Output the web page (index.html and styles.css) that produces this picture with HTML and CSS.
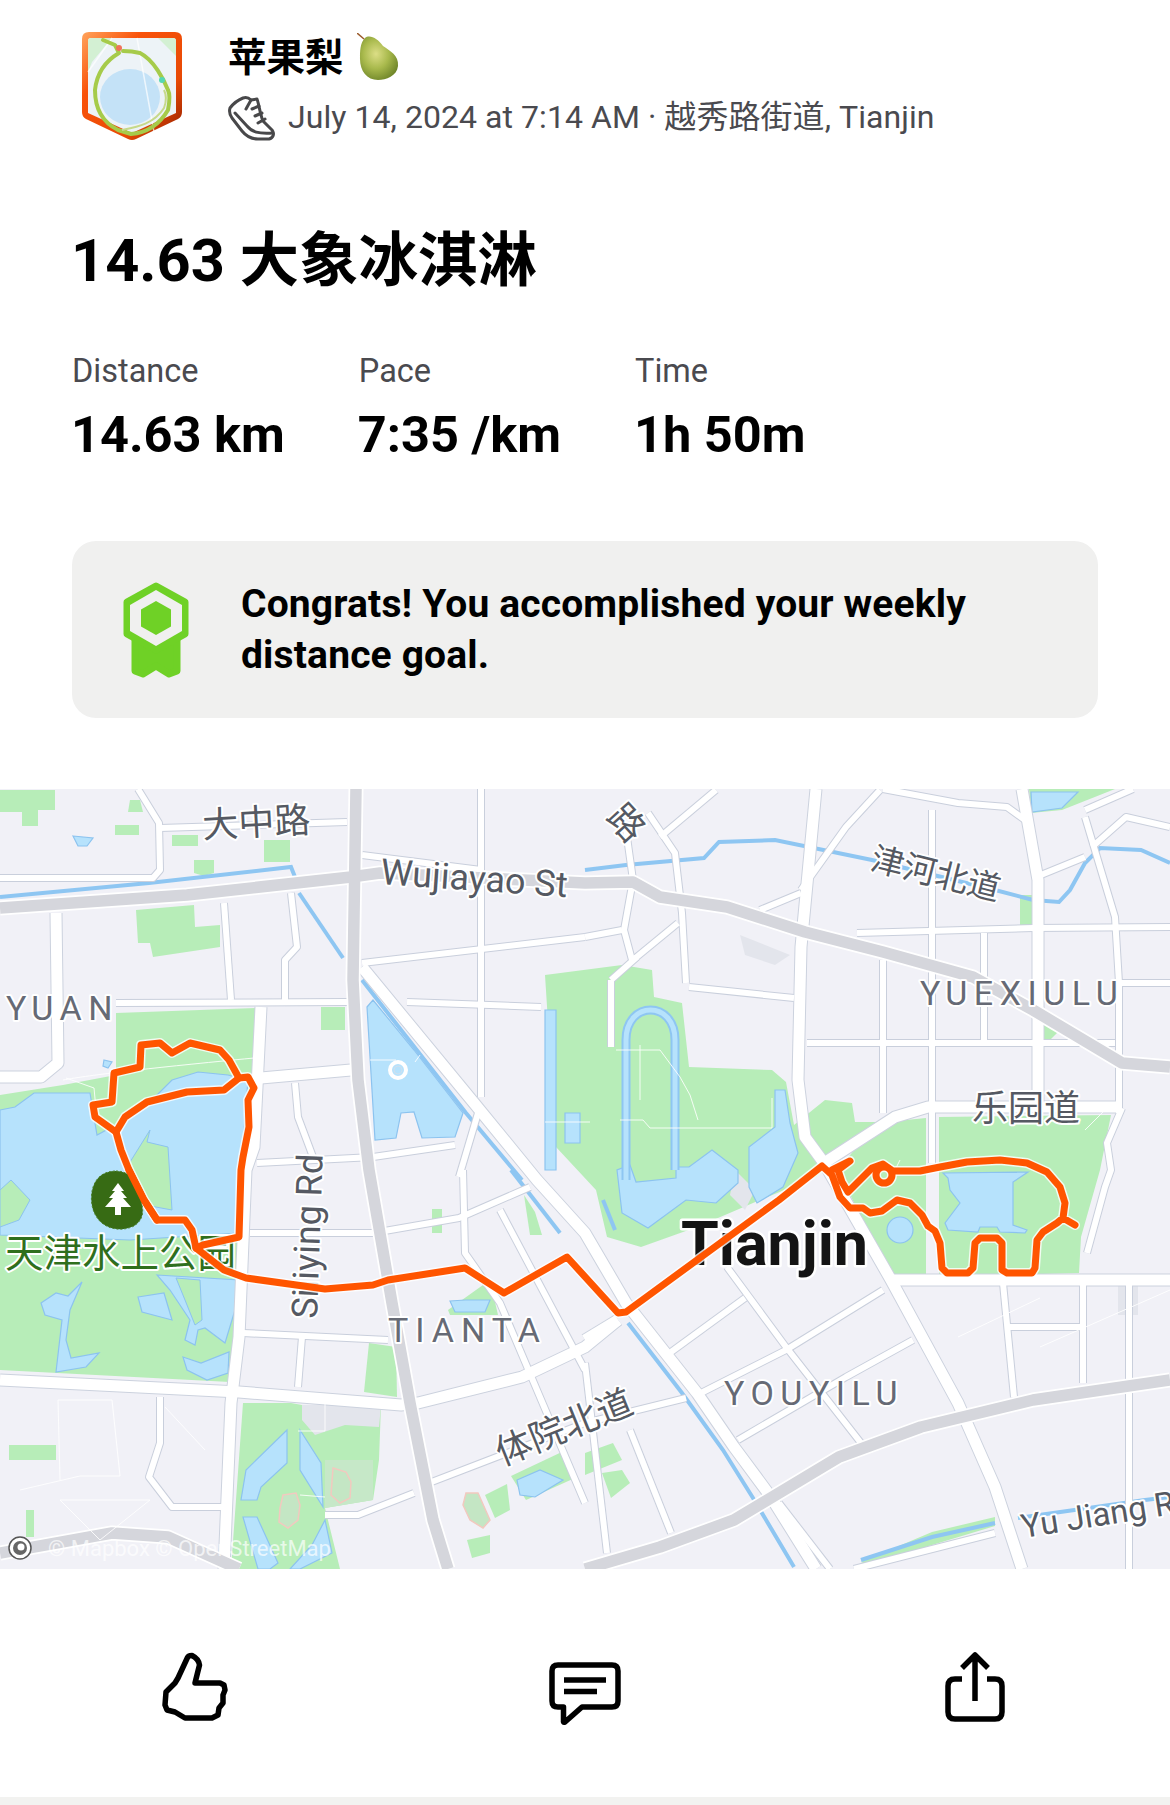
FILE: index.html
```html
<!DOCTYPE html>
<html lang="en">
<head>
<meta charset="utf-8">
<title>14.63 大象冰淇淋</title>
<link rel="stylesheet" href="styles.css">
</head>
<body>
<main class="page">
  <header class="head">
    <svg class="badge" viewBox="0 0 100 109" aria-hidden="true">
      <defs>
        <linearGradient id="shield" x1="0" y1="0" x2="1" y2="1">
          <stop offset="0" stop-color="#ffa45c"/>
          <stop offset=".3" stop-color="#f9520a"/>
          <stop offset=".7" stop-color="#e84a05"/>
          <stop offset="1" stop-color="#8f1d00"/>
        </linearGradient>
      </defs>
      <path fill="url(#shield)" d="M7 0H93Q100 0 100 7V80Q100 85 96 87L54 107Q50 109 46 107L4 87Q0 85 0 80V7Q0 0 7 0Z"/>
      <path fill="#edf3f7" d="M9 6H91Q94 6 94 9V81L50 101L6 81V9Q6 6 9 6Z"/>
      <path fill="#d3f0d3" d="M6 9Q6 6 9 6H30L10 30L6 40ZM76 6H91Q94 6 94 9V24Z"/>
      <ellipse fill="#c4e2f7" cx="48" cy="65" rx="30" ry="28"/>
      <path class="badge-line" d="M55 6L72 100M6 40L30 6"/>
      <path class="badge-route" d="M21 8L33 13L37 21C25 28 15 40 13 58C13 75 20 90 36 98L49 102C62 101 76 95 86 78C88 68 88 62 86 58C82 48 72 28 58 21C50 19 44 19 41 19"/>
      <path class="badge-route-b" d="M40 98C55 95 72 92 82 76C85 68 84 62 82 58"/>
      <circle fill="#f0735a" cx="37" cy="16" r="3"/>
      <circle fill="#55d8b4" cx="80" cy="48" r="3"/>
    </svg>
    <div class="who">
      <div class="name">苹果梨
        <svg class="pear" viewBox="0 0 42 47" aria-hidden="true">
          <defs>
            <radialGradient id="pearfill" cx=".42" cy=".4" r=".68">
              <stop offset="0" stop-color="#dcde86"/>
              <stop offset=".5" stop-color="#a8b94c"/>
              <stop offset="1" stop-color="#6a8126"/>
            </radialGradient>
          </defs>
          <path fill="url(#pearfill)" d="M8 5C13 1 21 6 26 13C33 18 42 22 41 33C40 43 29 47 21 47C10 47 3 38 3 26C3 18 3 10 8 5Z"/>
          <path class="pear-stem" d="M0 0L7 6"/>
        </svg>
      </div>
      <div class="meta">
        <svg class="shoe" viewBox="0 0 47 45" aria-hidden="true">
          <path d="M2 12C5 8 10 4 15 2C18 1 21 2 23 4L29 3C31 8 32 18 35 25L44 34C47 38 45 42 41 43H30C24 43 18 40 14 35L4 22C2 19 1 15 2 12Z"/>
          <path d="M7 17L19 30C24 36 30 38 45 37M23 4L18 13M24 13L31 10M27 20L34 17M30 27L37 23"/>
        </svg>
        <span>July 14, 2024 at 7:14 AM · 越秀路街道, Tianjin</span>
      </div>
    </div>
  </header>

  <h1 class="title">14.63 大象冰淇淋</h1>

  <section class="stats">
    <div class="stat"><div class="label">Distance</div><div class="value">14.63 km</div></div>
    <div class="stat"><div class="label">Pace</div><div class="value">7:35 /km</div></div>
    <div class="stat"><div class="label">Time</div><div class="value">1h 50m</div></div>
  </section>

  <section class="goal">
    <svg class="medal" viewBox="0 0 66 96" aria-hidden="true">
      <path class="medal-fill" d="M12 50H54V89L46 92L33 84L20 92L12 89Z"/>
      <path class="medal-fill" d="M33 4L62 20V52L33 68L4 52V20Z"/>
      <path class="medal-hole" d="M33 8L59 23V49L33 64L7 49V23Z"/>
      <path class="medal-core" d="M33 19L48 27.500V44.500L33 53L18 44.500V27.500Z"/>
    </svg>
    <p class="goal-text">Congrats! You accomplished your weekly distance goal.</p>
  </section>

  <figure class="map">
    <svg class="map-svg" viewBox="0 789 1170 780" role="img" aria-label="Route map of Tianjin">
      <defs>
        <g id="minor">
          <path d="M0 878H153L160 870L159 823L138 789"/>
          <path d="M160 828L347 822"/>
          <path d="M224 903L231 1000"/>
          <path d="M116 1003L347 1002"/>
          <path d="M291 893L297 947L285 960V1000"/>
          <path d="M362 855L481 870"/>
          <path d="M481 789V1097"/>
          <path d="M362 963L585 937"/>
          <path d="M407 1002L541 1007"/>
          <path d="M295 1083L298 1117L313 1157"/>
          <path d="M257 1163L373 1157L455 1145"/>
          <path d="M459 1177L478 1113"/>
          <path d="M250 1233H373L459 1218L530 1187"/>
          <path d="M463 1170L465 1253L500 1303L534 1383L585 1503"/>
          <path d="M243 1333L388 1340"/>
          <path d="M302 1337L298 1387"/>
          <path d="M500 1210L585 1370"/>
          <path d="M160 1397V1443L149 1477L172 1507H224"/>
          <path d="M325 1515H358L414 1493"/>
          <path d="M429 1483L585 1423L686 1398"/>
          <path d="M671 1352L745 1298"/>
          <path d="M701 1393L786 1350L883 1290"/>
          <path d="M738 1440L846 1377L913 1340"/>
          <path d="M727 1267L786 1347L861 1443"/>
          <path d="M1003 1283L1014 1397"/>
          <path d="M1007 1327H1085"/>
          <path d="M1083 1283V1383"/>
          <path d="M854 1569L995 1533"/>
          <path d="M630 1430L671 1533"/>
          <path d="M585 1363L607 1553"/>
          <path d="M779 1503L830 1569"/>
          <path d="M1087 1253L1105 1187L1111 1170L1107 1143L1122 1108"/>
          <path d="M622 930L585 937"/>
          <path d="M633 960L678 923"/>
          <path d="M626 830L633 880L624 930L632 960"/>
          <path d="M648 813L675 853L682 913L686 983"/>
          <path d="M660 837L716 790"/>
          <path d="M689 987L794 998"/>
          <path d="M801 890L846 827L880 790"/>
          <path d="M760 910L801 893"/>
          <path d="M883 789L958 803L1007 807L1025 820"/>
          <path d="M1085 810L1133 789"/>
          <path d="M1085 817L1115 917L1119 983V1113"/>
          <path d="M1092 847L1126 817L1170 827"/>
          <path d="M1036 877L1085 857"/>
          <path d="M932 810V1163"/>
          <path d="M857 933L1033 928L1170 927"/>
          <path d="M883 960V1113"/>
          <path d="M984 933V1043"/>
          <path d="M807 1043H1115"/>
          <path d="M1119 983H1170"/>
          <path d="M611 980L637 957"/>
          <path d="M611 980V1047"/>
          <path d="M1129 1283V1569"/>
        </g>
        <g id="major">
          <path d="M0 1380L239 1392L401 1405L418 1403L522 1377L585 1347L618 1320"/>
          <path d="M362 967L474 1103L537 1180L585 1233L626 1303L697 1393L734 1447L771 1497L816 1569"/>
          <path d="M261 1007L254 1147L246 1170L239 1337L231 1403L224 1569"/>
          <path d="M816 789L801 947L798 1080L805 1137L824 1163L891 1280L958 1403L995 1487L1022 1569"/>
          <path d="M891 1280H1170"/>
          <path d="M824 1163L895 1117L928 1107H1122"/>
          <path d="M1022 789L1038 880V1107"/>
          <path d="M56 913L58 1063L41 1077H0"/>
          <path d="M261 1078L351 1070"/>
          <path d="M585 1340L618 1320"/>
        </g>
        <g id="highway">
          <path d="M0 908L187 895L351 877L380 873L585 883L633 882L660 897L727 907L805 932L883 952L973 977L1033 1010L1122 1063L1170 1067"/>
          <path d="M356 789L353 980L358 1080L369 1170L392 1303L410 1403L433 1520L448 1569"/>
          <path d="M585 1569L660 1547L734 1520L839 1457L921 1427L1033 1400L1170 1380"/>
          <path d="M0 1553L112 1533L168 1537L239 1569"/>
        </g>
      </defs>

      <rect class="land" x="0" y="789" width="1170" height="780"/>

      <g class="park">
        <path d="M116 1013L257 1008L254 1073L245 1280L230 1382L0 1370V1095L63 1085L116 1075Z"/>
        <path d="M545 975L622 965L652 970L654 997L682 1003L689 1067L772 1070L786 1082L794 1125L825 1100L852 1103L855 1122L880 1122L816 1177L760 1200L697 1227L641 1247L607 1237L596 1190L556 1147Z"/>
        <path d="M939 1117L1111 1115L1100 1170L1081 1237L1079 1273L939 1277Z"/>
        <path d="M838 1170L876 1123L926 1118V1277H896L860 1215Z"/>
        <path d="M243 1403H291L302 1405H381L379 1460L373 1500L325 1508L340 1569H231Z"/>
        <path d="M1029 789H1115L1062 810L1031 813Z"/>
        <path d="M136 910L194 905L195 927L220 925V947L153 957L150 943L138 943Z"/>
        <path d="M321 1007H345V1030H321Z"/>
        <path d="M115 825H139V835H115Z"/>
        <path d="M194 860H214V873L204 876L194 873Z"/>
        <path d="M172 835H198V846H172Z"/>
        <path d="M264 840H290V862H264Z"/>
        <path d="M0 790H55V810H38V826H22V812H0Z"/>
        <path d="M130 800H140L143 812H128Z"/>
        <path d="M369 1343L396 1347L397 1397L364 1392Z"/>
        <path d="M9 1445H56V1460H9Z"/>
        <path d="M26 1510H34V1537H26Z"/>
        <path d="M585 1453L613 1443L622 1460L585 1475Z"/>
        <path d="M602 1473L622 1470L630 1483L611 1498Z"/>
        <path d="M511 1476L566 1450L575 1478L526 1500Z"/>
        <path d="M485 1495L507 1484L510 1510L495 1518Z"/>
        <path d="M467 1540L490 1535L490 1553L472 1558Z"/>
        <path d="M1020 895H1032V930H1020Z"/>
        <path d="M1040 1025H1065L1050 1040H1040Z"/>
        <path d="M432 1233H442V1209H432Z"/>
        <path d="M524 1195L535 1212L542 1235L530 1235Z"/>
        <path d="M448 1310L490 1280L498 1315L450 1315Z"/>
        <path d="M861 1562L932 1532L995 1517V1526L932 1545L870 1566Z"/>
      </g>

      <g class="park-soft">
        <path d="M325 1460L373 1460L373 1500L325 1508Z"/>
      </g>
      <path class="gray-block" d="M302 1405H381L379 1427L345 1425L315 1435L302 1420Z"/>
      <path class="gray-block" d="M1118 1285H1138V1315H1118Z"/>
      <path class="gray-block" d="M735 1170L755 1190L745 1210L730 1195Z"/>
      <path class="gray-block" d="M740 935L790 955L775 965L745 955Z"/>

      <g class="water">
        <path d="M0 1110L15 1107L34 1093L90 1093L97 1135L125 1120L149 1103L172 1080L198 1072L228 1075L248 1080L241 1170L239 1233L130 1240L0 1235Z"/>
        <path d="M41 1303L56 1293L68 1296L82 1282L70 1310L66 1340L71 1358L99 1353L86 1367L56 1372L62 1320L45 1315Z"/>
        <path d="M138 1297L164 1293L172 1320L142 1312Z"/>
        <path d="M157 1275L239 1280L235 1310L225 1343L205 1328L198 1330L195 1345L185 1340L190 1320L170 1290Z"/>
        <path d="M183 1357L201 1363L229 1352L228 1373L207 1380L187 1370Z"/>
        <path d="M367 1007L373 1000L414 1050L463 1113L455 1137L422 1138L414 1112L401 1113L396 1138L375 1140Z"/>
        <path d="M617 1170L622 1213L648 1228L686 1200L716 1203L738 1183V1170L712 1150L689 1167H676V1178L636 1182L630 1165Z"/>
        <path d="M775 1090H785L790 1123L798 1153L783 1187L757 1203L749 1187V1147L775 1127Z"/>
        <path d="M545 1010H556V1170H545Z"/>
        <path d="M565 1113H580V1143H565Z"/>
        <path d="M943 1173L1028 1172L1013 1182V1225L1027 1230L1025 1233L1000 1232L997 1227H980L978 1232L948 1230L945 1223L960 1203L950 1190L948 1178Z"/>
        <circle cx="900" cy="1230" r="13"/>
        <path d="M287 1430V1463L261 1487L257 1500H241L246 1470Z"/>
        <path d="M300 1430L321 1463L323 1507L300 1470Z"/>
        <path d="M243 1517H257L278 1563L270 1569H258Z"/>
        <path d="M325 1520L332 1553L300 1569H290L312 1545Z"/>
        <path d="M1031 792H1078L1062 808L1032 812Z"/>
        <path d="M73 836L93 838L87 846H78Z"/>
        <path d="M104 1060L112 1062L108 1068L103 1066Z"/>
        <path d="M517 1480L540 1470L563 1480L535 1497L520 1495Z"/>
        <path d="M450 1301L465 1300L490 1300L485 1312L455 1312Z"/>
      </g>
      <path class="green-isle" d="M150 1130L147 1142L168 1147L172 1210L145 1205L125 1170Z"/>
      <path class="green-isle" d="M0 1190L11 1180L30 1200L19 1220L0 1227Z"/>
      <path class="green-isle" d="M176 1278L200 1280L202 1320L195 1325L185 1300Z"/>
      <path class="track" d="M626 1180V1040C626 1000 675 1000 675 1040V1170"/>
      <path class="track-in" d="M626 1180V1040C626 1000 675 1000 675 1040V1170"/>

      <g class="canal">
        <path d="M0 897L149 883L291 867L295 877"/>
        <path d="M585 870L626 865L704 858L719 842L775 840L872 860L995 890L1033 900L1059 902L1070 890L1085 863L1100 848L1141 850L1170 863"/>
        <path d="M299 893L343 958"/>
        <path d="M362 980L466 1113L522 1180"/>
        <path d="M511 1170L560 1233"/>
        <path d="M628 1323L682 1393L723 1450L753 1498L794 1567"/>
        <path d="M861 1560L932 1537L995 1523"/>
        <path d="M1018 1518L1145 1500L1170 1497"/>
        <path d="M603 1200L615 1230"/>
      </g>

      <use href="#minor" class="case-minor"/>
      <use href="#major" class="case-major"/>
      <use href="#highway" class="case-highway"/>
      <use href="#minor" class="fill-minor"/>
      <use href="#major" class="fill-major"/>
      <use href="#highway" class="fill-highway"/>

      <g class="path-thin">
        <path d="M63 1080C90 1075 150 1068 254 1058"/>
        <path d="M66 1078L94 1088L97 1120"/>
        <path d="M616 1050H660L680 1077L690 1095L698 1120"/>
        <path d="M545 1122H590M640 1045V1100"/>
        <path d="M620 1120H643L650 1128H772"/>
        <path d="M772 1098V1128"/>
        <path d="M1085 1130L1110 1105"/>
        <path d="M396 1060H370"/>
        <path d="M415 1062L420 1055"/>
        <path d="M165 1407L205 1450"/>
        <path d="M325 1400V1431H298"/>
        <path d="M890 1180L900 1160"/>
        <path d="M1040 1347L1170 1290"/>
        <path d="M958 1337L1040 1298"/>
        <path d="M300 1495L325 1497"/>
        <path d="M20 1490L80 1476H120L112 1400H58L60 1480"/>
        <path d="M60 1500H150L100 1540L60 1500"/>
      </g>
      <circle class="ring" cx="398" cy="1070" r="8"/>
      <circle class="ring-soft" cx="398" cy="1070" r="4"/>

      <g class="pink">
        <path d="M283 1495L296 1493L300 1505L298 1520L288 1528L279 1522L280 1508Z"/>
        <path d="M333 1468L346 1472L351 1482L350 1498L340 1503L331 1495Z"/>
        <path d="M466 1493L478 1493L490 1520L483 1528L470 1520L463 1505Z"/>
      </g>

      <text class="lbl lbl-road" x="203" y="838" transform="rotate(-3 203 838)">大中路</text>
      <text class="lbl lbl-en" x="380" y="884" transform="rotate(4 380 884)">Wujiayao St</text>
      <text class="lbl lbl-road" x="605" y="818" transform="rotate(48 605 818)">路</text>
      <text class="lbl lbl-road lbl-small" x="869" y="869" transform="rotate(14 869 869)">津河北道</text>
      <text class="lbl lbl-area" x="920" y="1005">YUEXIULU</text>
      <text class="lbl lbl-road" x="972" y="1121">乐园道</text>
      <text class="lbl lbl-area" x="6" y="1020">YUAN</text>
      <text class="lbl lbl-en" x="317" y="1319" transform="rotate(-88 317 1319)">Siliying Rd</text>
      <text class="lbl lbl-area lbl-wide" x="388" y="1342">TIANTA</text>
      <text class="lbl lbl-area" x="724" y="1405">YOUYILU</text>
      <text class="lbl lbl-road" x="502" y="1466" transform="rotate(-22 502 1466)">体院北道</text>
      <text class="lbl lbl-river" x="1023" y="1538" transform="rotate(-9 1023 1538)">Yu Jiang Rd</text>
      <text class="lbl lbl-park" x="5" y="1267">天津水上公园</text>
      <text class="lbl lbl-city" x="681" y="1265">Tianjin</text>
      <text class="attrib" x="48" y="1556">© Mapbox © OpenStreetMap</text>

      <circle class="logo-o" cx="20" cy="1548" r="11"/>
      <circle class="logo-i" cx="20" cy="1548" r="7"/>
      <circle class="logo-d" cx="21" cy="1547" r="3.500"/>

      <path class="route-halo" d="M116 1132L95 1117L93 1105L112 1102L114 1073L140 1067L141 1045L160 1043L172 1053L190 1043L220 1050L229 1060L239 1078L248 1077L254 1088L248 1100L249 1127L243 1157L241 1170L239 1237L203 1245L196 1248"/>
      <path class="route-halo" d="M239 1078L224 1090L187 1092L147 1102L125 1117L116 1132L121 1150L129 1170L144 1200L157 1220H185L192 1230L196 1248L224 1270L246 1278L325 1289L373 1285L388 1280L465 1268L504 1293L567 1257L618 1313L626 1312L779 1200L822 1166L832 1175L840 1197L850 1208H863L870 1213L882 1211L897 1200L910 1203L922 1215L928 1226L935 1231L940 1243L942 1268L947 1273H968L973 1268L975 1243L980 1238H997L1002 1243V1270L1007 1273H1032L1035 1268L1037 1240L1043 1232L1057 1223L1063 1218L1075 1225M1063 1218L1065 1203L1060 1187L1047 1172L1027 1163L1000 1160L967 1162L940 1167L920 1171H893L883 1164L872 1168L848 1192L842 1182L838 1170L850 1161L832 1170"/>
      <circle class="route-halo" cx="884" cy="1175" r="8"/>
      <path class="route" d="M116 1132L95 1117L93 1105L112 1102L114 1073L140 1067L141 1045L160 1043L172 1053L190 1043L220 1050L229 1060L239 1078L248 1077L254 1088L248 1100L249 1127L243 1157L241 1170L239 1237L203 1245L196 1248"/>
      <path class="route" d="M239 1078L224 1090L187 1092L147 1102L125 1117L116 1132L121 1150L129 1170L144 1200L157 1220H185L192 1230L196 1248L224 1270L246 1278L325 1289L373 1285L388 1280L465 1268L504 1293L567 1257L618 1313L626 1312L779 1200L822 1166L832 1175L840 1197L850 1208H863L870 1213L882 1211L897 1200L910 1203L922 1215L928 1226L935 1231L940 1243L942 1268L947 1273H968L973 1268L975 1243L980 1238H997L1002 1243V1270L1007 1273H1032L1035 1268L1037 1240L1043 1232L1057 1223L1063 1218L1075 1225M1063 1218L1065 1203L1060 1187L1047 1172L1027 1163L1000 1160L967 1162L940 1167L920 1171H893L883 1164L872 1168L848 1192L842 1182L838 1170L850 1161L832 1170"/>
      <circle class="route" cx="884" cy="1175" r="8"/>

      <path class="pin" d="M116 1171C132 1171 141 1186 140 1197C143 1208 146 1218 134 1226C122 1232 104 1230 96 1216C88 1204 88 1171 116 1171Z"/>
      <path class="pin-tree" d="M118 1183L124 1191H121L127 1198H123L131 1207H121V1215H115V1207H105L113 1198H109L115 1191H112Z"/>
      <path class="route-over" d="M129 1170L144 1200L157 1220"/>
    </svg>
  </figure>

  <nav class="actions">
    <svg class="act act-like" viewBox="-5 0 100 100" aria-label="Give kudos">
      <path d="M45 43L49.500 25C49 21 47 18 42 15.500C40 15.500 38 16 37.500 17.500L28 38L25 43L16 52L15 65L17 70L25 72L35 78H62L68 75L69 68L73 63V55L75 50L74 45L70 43Z"/>
    </svg>
    <svg class="act act-comment" viewBox="5 0 100 100" aria-label="Comment">
      <path d="M28 25H82Q88 25 88 31V61Q88 67 82 67H52L35 82Q33 83 33.500 80V67H28Q22 67 22 61V31Q22 25 28 25Z"/>
      <path d="M34 40H76M34 51.500H67"/>
    </svg>
    <svg class="act act-share" viewBox="0 0 100 100" aria-label="Share">
      <path d="M37 39H30Q23 39 23 46V72Q23 79 30 79H70Q77 79 77 72V46Q77 39 70 39H62"/>
      <path d="M50 61V16M37 28L50 15L63 28"/>
    </svg>
  </nav>
  <div class="foot"></div>
</main>
</body>
</html>
```
FILE: styles.css
```css
* { box-sizing: border-box; }
html, body { margin: 0; padding: 0; background: #fff; }
body {
  font-family: Roboto, "Noto Sans CJK SC", sans-serif;
  color: #000;
}
.page { width: 1170px; height: 1805px; overflow: hidden; display: flex; flex-direction: column; }

.head { display: flex; gap: 48px; padding: 32px 72px 0 82px; height: 141px; }
.badge { width: 100px; height: 109px; flex: none; }
.badge-route { fill: none; stroke: #a6cb4a; stroke-width: 4; stroke-linejoin: round; stroke-linecap: round; }
.badge-route-b { fill: none; stroke: #c6d98a; stroke-width: 2; }
.badge-line { fill: none; stroke: #fff; stroke-width: 1.500; opacity: .7; }
.who { display: flex; flex-direction: column; margin: -2px 0 0 -2px; }
.name { font-family: "Noto Sans CJK SC", sans-serif; font-size: 38.500px; font-weight: 700; line-height: 48px; height: 64px; display: flex; align-items: flex-start; gap: 13px; }
.pear { width: 42px; height: 47px; margin-top: 3px; }
.pear-stem { fill: none; stroke: #9a5a2a; stroke-width: 1.500; }
.meta { display: flex; align-items: center; gap: 13px; font-size: 32px; letter-spacing: .06px; line-height: 45px; color: #4a4a4f; white-space: nowrap; }
.shoe { width: 47px; height: 45px; flex: none; margin-top: 2px; }
.shoe path { fill: none; stroke: #48484a; stroke-width: 3; stroke-linejoin: round; stroke-linecap: round; }

.title { margin: 86px 0 0 71px; font-family: Roboto, "Noto Sans CJK SC", sans-serif; font-size: 59.500px; font-weight: 700; line-height: 68px; }

.stats { display: flex; gap: 73px; margin: 56px 0 0 71px; }
.label { font-size: 32.500px; line-height: 40px; color: #4a4a4f; margin-left: 1px; }
.value { font-size: 50.500px; font-weight: 700; line-height: 60px; margin-top: 14px; }

.goal { display: flex; align-items: center; gap: 52px; margin: 76px 72px 0; height: 177px; padding: 0 100px 0 51px; background: #f0f0ef; border-radius: 24px; }
.medal { width: 66px; height: 96px; flex: none; }
.medal-fill { fill: #6fd126; stroke: #6fd126; stroke-width: 7; stroke-linejoin: round; }
.medal-hole { fill: #f0f0ef; }
.medal-core { fill: #6fd126; }
.goal-text { margin: 0; font-size: 39px; letter-spacing: .15px; font-weight: 700; line-height: 51px; }

.map { margin: 71px 0 0; height: 780px; overflow: hidden; }
.map-svg { display: block; width: 1170px; height: 780px; }
.land { fill: #f1f1f7; }
.park path { fill: #b7edb8; }
.park-soft path { fill: #c6e8c8; }
.gray-block { fill: #e3e5ec; }
.water path, .water circle { fill: #b6e2fc; stroke: #8cc3ef; stroke-width: 1.200; }
.green-isle { fill: #b7edb8; stroke: #8cc3ef; stroke-width: 1; }
.track { fill: none; stroke: #8ec6f2; stroke-width: 9; }
.track-in { fill: none; stroke: #b6e2fc; stroke-width: 5; }
.canal path { fill: none; stroke: #8ec6f2; stroke-width: 4; }
.case-minor, .case-major, .case-highway, .fill-minor, .fill-major, .fill-highway { fill: none; stroke-linejoin: round; }
.case-minor { stroke: #c9cfdc; stroke-width: 8; }
.fill-minor { stroke: #fff; stroke-width: 6; }
.case-major { stroke: #ccd2de; stroke-width: 13; }
.fill-major { stroke: #fff; stroke-width: 11; }
.case-highway { stroke: #fff; stroke-width: 15; }
.fill-highway { stroke: #d5d6dc; stroke-width: 11.500; }
.path-thin path { fill: none; stroke: #fff; stroke-width: 1; opacity: .85; }
.ring { fill: none; stroke: #fff; stroke-width: 4; }
.ring-soft { fill: none; stroke: #cfe0ee; stroke-width: 1; }
.pink path { fill: #c4e6c4; stroke: #f2c9bf; stroke-width: 1.500; }

.lbl { paint-order: stroke; stroke: #fff; stroke-width: 4px; stroke-linejoin: round; fill: #555962; font-family: Roboto, "Noto Sans CJK SC", sans-serif; }
.lbl-road { font-family: "Noto Sans CJK SC", sans-serif; font-size: 36px; }
.lbl-small { font-size: 33px; }
.lbl-en { font-size: 36px; }
.lbl-river { font-size: 33px; }
.lbl-area { font-size: 34px; letter-spacing: 6.500px; fill: #666a75; }
.lbl-wide { letter-spacing: 7px; }
.lbl-park { font-family: "Noto Sans CJK SC", sans-serif; font-size: 38.500px; fill: #2f6f1d; }
.lbl-city { font-size: 61px; font-weight: 700; fill: #141414; stroke-width: 5px; }
.attrib { font-family: Roboto, sans-serif; font-size: 22px; fill: #fff; fill-opacity: .7; }
.logo-o { fill: #fff; stroke: #555; stroke-width: 1.500; }
.logo-i { fill: #666; }
.logo-d { fill: #fff; }

.route-halo { fill: none; stroke: #fff; stroke-width: 10; stroke-linejoin: round; stroke-linecap: round; opacity: .8; }
.route { fill: none; stroke: #ff5500; stroke-width: 7; stroke-linejoin: round; stroke-linecap: round; }
.route-over { fill: none; stroke: #ff5500; stroke-width: 7; stroke-linejoin: round; stroke-linecap: round; }
.pin { fill: #376b14; stroke: #4f8530; stroke-width: 1; stroke-dasharray: 2 2; }
.pin-tree { fill: #fff; }

.actions { display: grid; grid-template-columns: repeat(3, 1fr); justify-items: center; padding-top: 71px; height: 228px; }
.act { width: 100px; height: 100px; display: block; }
.act path { fill: none; stroke: #000; stroke-width: 5.500; stroke-linejoin: round; stroke-linecap: butt; }
.foot { height: 8px; background: #f2f2f0; }
```
